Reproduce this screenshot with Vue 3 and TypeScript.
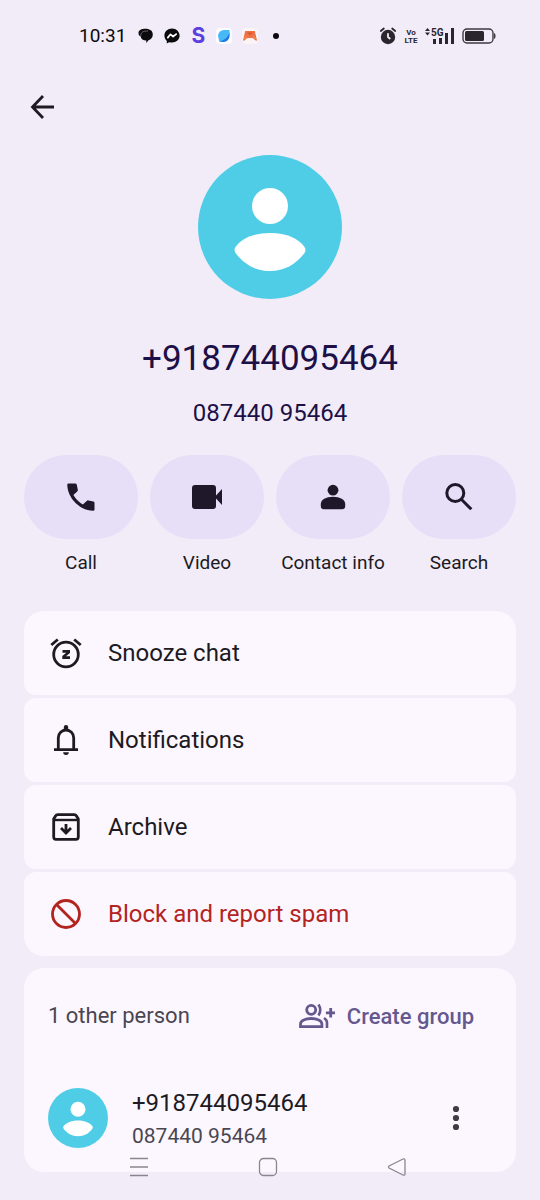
<script setup lang="ts">
interface QuickAction {
  id: 'call' | 'video' | 'contact' | 'search'
  label: string
}

interface MenuItem {
  id: 'snooze' | 'notifications' | 'archive' | 'block'
  label: string
  danger?: boolean
}

const fullNumber = '+918744095464'
const localNumber = '087440 95464'

const actions: QuickAction[] = [
  { id: 'call', label: 'Call' },
  { id: 'video', label: 'Video' },
  { id: 'contact', label: 'Contact info' },
  { id: 'search', label: 'Search' },
]

const menu: MenuItem[] = [
  { id: 'snooze', label: 'Snooze chat' },
  { id: 'notifications', label: 'Notifications' },
  { id: 'archive', label: 'Archive' },
  { id: 'block', label: 'Block and report spam', danger: true },
]
</script>

<template>
  <div class="screen">
    <div class="status">
      <div class="status-left">
        <span class="time">10:31</span>
        <svg width="16" height="16" viewBox="0 0 16 16" aria-hidden="true">
          <path d="M.5 5C.5 2.200 3.500.800 7.500.800c4.500 0 7.300 2.200 7.300 5.700 0 3.300-2 5-4.300 5.700L8.300 15v-2.500C5 12.500 3 11 2.800 8.500 1.200 8.300.5 6.500.5 5Z" fill="#0b0a0d" />
          <path d="M2.800 8C2.500 4.300 5 2.900 10 3" fill="none" stroke="#8f8b95" stroke-width="0.700" />
        </svg>
        <svg width="16" height="16" viewBox="0 0 16 16" aria-hidden="true">
          <path d="M8 .4C3.700.4.400 3.500.400 7.600c0 2.200.9 4 2.400 5.300v2.500l2.300-1.200c.9.300 1.900.4 2.900.4 4.300 0 7.600-3 7.600-7S12.300.4 8 .4Z" fill="#0b0a0d" />
          <path d="m3.800 9.600 2.700-3.300 2.600 2.200 3.100-2.400" fill="none" stroke="#fff" stroke-width="1.700" stroke-linejoin="round" stroke-linecap="round" />
        </svg>
        <span class="s-logo">S</span>
        <svg width="16" height="16" viewBox="0 0 16 16" aria-hidden="true">
          <rect width="16" height="16" rx="4" fill="#fcfbff" />
          <path d="M2 8a6 6 0 0 1 6-6h5.500v5A7 7 0 0 1 7 14H3.500Z" fill="#48b9f7" />
          <path d="M4 13.500C9 12 12.500 8.500 13.500 4v4A6 6 0 0 1 7.500 14Z" fill="#1e78e6" />
        </svg>
        <svg width="16" height="16" viewBox="0 0 16 16" aria-hidden="true">
          <rect width="16" height="16" rx="4" fill="#fbf4f6" />
          <path d="M3.200 3h9.600l2.200 9.500c-2 .8-3-2.500-5-2.500H6c-2 0-3 3.300-5 2.500Z" fill="#ed7042" />
          <path d="M5 4.500h6L8 7.500Z" fill="#d55735" />
          <path d="m2.500 11 2-2.500M13.500 11l-2-2.500" stroke="#f99a63" />
        </svg>
        <svg class="more-dot" width="6" height="6" viewBox="0 0 6 6" aria-hidden="true"><circle cx="3" cy="3" r="3" fill="#0b0a0d" /></svg>
      </div>
      <div class="status-right">
        <svg width="18" height="18" viewBox="0 0 18 18" aria-hidden="true">
          <circle cx="9" cy="10" r="7.200" fill="#29262e" />
          <path d="M1.800 4 4.800 1.500M16.200 4 13.200 1.500" stroke="#29262e" stroke-width="1.800" stroke-linecap="round" />
          <path d="M9 7V10l1.800 1.500" fill="none" stroke="#f2ecf8" stroke-width="1.800" stroke-linecap="round" />
        </svg>
        <svg class="volte" width="14" height="18" viewBox="0 0 14 18" aria-hidden="true">
          <text x="7" y="8" text-anchor="middle">Vo</text>
          <text x="7" y="16" text-anchor="middle">LTE</text>
        </svg>
        <svg class="signal" width="30" height="18" viewBox="0 0 30 18" aria-hidden="true">
          <path d="m0 4 2.500-3L5 4ZM0 5.500 2.500 8.500 5 5.500Z" fill="#29262e" />
          <text x="6" y="9">5G</text>
          <path d="M8 12h3v5H8ZM14 11h3v6h-3ZM20 6h3v11h-3ZM26 1h3v16h-3Z" fill="#29262e" />
        </svg>
        <svg width="34" height="16" viewBox="0 0 34 16" aria-hidden="true">
          <rect x="1" y="1" width="30" height="14" rx="4" fill="none" stroke="#3b3840" stroke-width="1.400" />
          <rect x="3" y="3" width="19" height="10" rx="1.500" fill="#29262e" />
          <path d="M32 5c2 .5 2 5.500 0 6Z" fill="#3b3840" />
        </svg>
      </div>
    </div>

    <header class="topbar">
      <button class="icon-button" type="button" aria-label="Back">
        <svg width="36" height="36" viewBox="0 0 36 36" aria-hidden="true">
          <path d="M30 18H9M19 7 8.500 18 19 29" fill="none" stroke="#1d1a22" stroke-width="2.800" />
        </svg>
      </button>
    </header>

    <main>
      <section class="profile">
        <svg class="avatar-large" viewBox="0 0 144 144" aria-hidden="true">
          <circle cx="72" cy="72" r="72" fill="#4fcde6" />
          <circle cx="72" cy="51" r="18" fill="#fff" />
          <path d="M72 78c17 0 29 6 34.500 14q2 3 0 6C98 109 87 116 72 116S46 109 37.500 98q-2-3 0-6C43 84 55 78 72 78Z" fill="#fff" />
        </svg>
        <h1>{{ fullNumber }}</h1>
        <p class="local">{{ localNumber }}</p>
      </section>

      <nav class="actions" aria-label="Quick actions">
        <button v-for="action in actions" :key="action.id" class="action" type="button">
          <span class="pill">
            <svg width="36" height="36" viewBox="0 0 36 36" aria-hidden="true">
              <path v-if="action.id === 'call'" d="M5.600 4.500h6.700q1.200 0 1.500 1.200l1 5q.2 1.100-.6 1.800l-3.800 3.600q3.600 6.200 9.500 9.500l3.800-3.700q.7-.7 1.700-.5l5 1.200q1.100.3 1.100 1.400v6.500q0 1.300-1.300 1.300C16 31.500 4.300 18 4.300 5.800q0-1.300 1.300-1.300Z" fill="#1f182b" />
              <path v-else-if="action.id === 'video'" d="M6 6h18q3 0 3 3v7.500l6-6.500v16l-6-6.500V27q0 3-3 3H6q-3 0-3-3V9q0-3 3-3Z" fill="#1f182b" />
              <template v-else-if="action.id === 'contact'">
                <circle cx="18" cy="11.200" r="5.400" fill="#1f182b" />
                <path d="M18 17.800c7 0 12.200 3 12.200 7.200v2q0 3.200-3.200 3.200H9q-3.200 0-3.200-3.200v-2c0-4.200 5.200-7.200 12.200-7.200Z" fill="#1f182b" />
              </template>
              <g v-else fill="none" stroke="#1f182b" stroke-width="3">
                <circle cx="14.300" cy="14" r="8.500" />
                <path d="m20.500 20.500 9.800 9.800" />
              </g>
            </svg>
          </span>
          <span class="action-label">{{ action.label }}</span>
        </button>
      </nav>

      <ul class="menu">
        <li v-for="item in menu" :key="item.id">
          <button class="menu-item" :class="{ danger: item.danger }" type="button">
            <svg width="36" height="36" viewBox="0 0 36 36" fill="none" stroke="currentColor" stroke-width="2.800" aria-hidden="true">
              <template v-if="item.id === 'snooze'">
                <circle cx="18" cy="19.500" r="12.300" />
                <path d="m3.300 10 6.500-5.500M32.700 10l-6.500-5.500" />
                <path d="M14.500 15h7.500v3l-4 3.200h4V24h-7.700v-3l4-3.200h-3.800Z" fill="currentColor" stroke="none" />
              </template>
              <template v-else-if="item.id === 'notifications'">
                <path d="M6 27.700h24M10.300 27V15.700a7.700 7.700 0 0 1 15.400 0V27" />
                <path d="M15.800 7.500V5.300a2.200 2.200 0 0 1 4.400 0v2.200ZM15.200 30.300h5.600a2.800 2.700 0 0 1-5.600 0Z" fill="currentColor" stroke="none" />
              </template>
              <template v-else-if="item.id === 'archive'">
                <path d="M5.700 10v18q0 2.300 2.300 2.300h20q2.300 0 2.300-2.300V10l-2-3.300q-.6-1-2-1H9.700q-1.400 0-2 1Z" />
                <path d="M6 11h24" stroke-width="2.400" />
                <path d="M18 15v8M13 19l5 5 5-5" />
              </template>
              <template v-else>
                <circle cx="18" cy="18" r="13.500" />
                <path d="m8.500 8.500 19 19" />
              </template>
            </svg>
            <span>{{ item.label }}</span>
          </button>
        </li>
      </ul>

      <section class="people">
        <div class="people-head">
          <h2>1 other person</h2>
          <button class="create" type="button">
            <svg width="36" height="36" viewBox="0 0 36 36" fill="none" stroke="currentColor" stroke-width="2.800" aria-hidden="true">
              <circle cx="12.200" cy="11.800" r="4.500" />
              <path d="M1.500 28.600V26c0-3.300 5-5.500 10.700-5.500S22.900 22.700 22.900 26v2.600Z" />
              <path d="M19.500 6.500q3.500 5.500 0 11M25 20q3 2 3 4.500V30" stroke-width="2.600" />
              <path d="M31.700 10v9.600M26.900 14.800h9.600" />
            </svg>
            <span>Create group</span>
          </button>
        </div>
        <div class="person">
          <svg class="avatar-small" viewBox="0 0 144 144" aria-hidden="true">
            <circle cx="72" cy="72" r="72" fill="#4fcde6" />
            <circle cx="72" cy="51" r="18" fill="#fff" />
            <path d="M72 78c17 0 29 6 34.500 14q2 3 0 6C98 109 87 116 72 116S46 109 37.500 98q-2-3 0-6C43 84 55 78 72 78Z" fill="#fff" />
          </svg>
          <div class="person-text">
            <p class="person-name">{{ fullNumber }}</p>
            <p class="person-sub">{{ localNumber }}</p>
          </div>
          <button class="icon-button person-more" type="button" aria-label="More options">
            <svg width="36" height="36" viewBox="0 0 36 36" fill="#403c46" aria-hidden="true">
              <circle cx="18" cy="9" r="3.100" />
              <circle cx="18" cy="18" r="3.100" />
              <circle cx="18" cy="27" r="3.100" />
            </svg>
          </button>
        </div>
      </section>
    </main>

    <div class="system-nav">
      <button type="button" aria-label="Recent apps">
        <svg width="20" height="20" viewBox="0 0 20 20" aria-hidden="true">
          <path d="M1 1.500h18M1 10h18M1 18.500h18" stroke="#89858f" stroke-width="1.500" />
        </svg>
      </button>
      <button type="button" aria-label="Home">
        <svg width="20" height="20" viewBox="0 0 20 20" aria-hidden="true">
          <rect x="1.500" y="1.500" width="17" height="17" rx="4" fill="none" stroke="#89858f" stroke-width="1.300" />
        </svg>
      </button>
      <button type="button" aria-label="Navigate back">
        <svg width="20" height="20" viewBox="0 0 20 20" aria-hidden="true">
          <path d="M2 9 16 2q2-.8 2 1.300v13.400q0 2.100-2 1.300L2 11q-1-1 0-2Z" fill="none" stroke="#89858f" stroke-width="1.300" />
        </svg>
      </button>
    </div>
  </div>
</template>

<style>
body {
  margin: 0;
  background: #f2ecf8;
}
</style>

<style scoped>
.screen {
  box-sizing: border-box;
  min-height: 100vh;
  padding-bottom: 28px;
  background: #f2ecf8;
  color: #1d1a22;
  font-family: Roboto, "Liberation Sans", sans-serif;
}

svg {
  display: block;
  flex: none;
}

h1,
h2,
p,
ul {
  margin: 0;
  padding: 0;
  font-weight: 400;
}

ul {
  list-style: none;
}

button {
  padding: 0;
  border: 0;
  background: none;
  color: inherit;
  font: inherit;
  cursor: pointer;
}

.status {
  display: flex;
  justify-content: space-between;
  align-items: center;
  height: 72px;
  padding: 0 44px 0 79px;
}

.status-left {
  display: flex;
  align-items: center;
  gap: 10px;
}

.time {
  margin-right: 2px;
  font-size: 19px;
  line-height: 24px;
  color: #0b0a0d;
}

.s-logo {
  width: 16px;
  font: 700 21px/24px Inter, sans-serif;
  text-align: center;
  color: #5b3fe0;
}

.more-dot {
  margin-left: 5px;
}

.status-right {
  display: flex;
  align-items: center;
  gap: 7px;
}

.volte text,
.signal text {
  font-weight: 700;
  font-size: 8px;
  fill: #29262e;
}

.signal text {
  font-size: 10px;
}

.topbar {
  padding: 11px 18px 0;
}

.icon-button {
  display: flex;
  align-items: center;
  justify-content: center;
  width: 48px;
  height: 48px;
}

main {
  padding: 24px 24px 0;
}

.profile {
  display: flex;
  flex-direction: column;
  align-items: center;
  color: #1c1047;
}

.avatar-large {
  width: 144px;
  height: 144px;
}

h1 {
  margin-top: 36px;
  font-size: 35px;
  line-height: 48px;
}

.local {
  margin-top: 12px;
  font-size: 24px;
  line-height: 36px;
}

.actions {
  display: grid;
  grid-template-columns: repeat(4, 1fr);
  gap: 12px;
  margin-top: 24px;
}

.action {
  display: flex;
  flex-direction: column;
  gap: 12px;
}

.pill {
  display: flex;
  align-items: center;
  justify-content: center;
  width: 100%;
  height: 84px;
  border-radius: 42px;
  background: #e7def7;
}

.action-label {
  width: 100%;
  font-size: 19px;
  line-height: 24px;
  text-align: center;
  white-space: nowrap;
}

.menu {
  display: grid;
  gap: 3px;
  margin-top: 36px;
}

.menu-item {
  display: flex;
  align-items: center;
  gap: 24px;
  width: 100%;
  height: 84px;
  padding: 0 24px;
  border-radius: 12px;
  background: #fcf7ff;
  font-size: 24px;
  line-height: 36px;
  text-align: left;
}

.menu li:first-child .menu-item {
  border-top-left-radius: 20px;
  border-top-right-radius: 20px;
}

.menu li:last-child .menu-item {
  border-bottom-left-radius: 20px;
  border-bottom-right-radius: 20px;
}

.danger {
  color: #b3241f;
}

.people {
  margin-top: 12px;
  padding: 24px 24px 18px;
  border-radius: 20px;
  background: #fcf7ff;
}

.people-head {
  display: flex;
  justify-content: space-between;
  align-items: center;
  height: 48px;
}

h2 {
  font-size: 22px;
  line-height: 30px;
  color: #4a4650;
}

.create {
  display: flex;
  align-items: center;
  gap: 12px;
  height: 48px;
  margin-right: 18px;
  font-size: 22px;
  font-weight: 500;
  color: #65588f;
}

.person {
  display: flex;
  align-items: flex-start;
  gap: 24px;
  margin-top: 48px;
}

.avatar-small {
  width: 60px;
  height: 60px;
}

.person-text {
  flex: 1;
}

.person-name {
  font-size: 24px;
  line-height: 30px;
}

.person-sub {
  font-size: 21px;
  line-height: 36px;
  color: #4a4650;
}

.person-more {
  height: 60px;
  margin-right: 12px;
}

.system-nav {
  position: fixed;
  right: 0;
  bottom: 23px;
  left: 0;
  display: flex;
  justify-content: center;
  gap: 109px;
  padding-right: 5px;
}
</style>
